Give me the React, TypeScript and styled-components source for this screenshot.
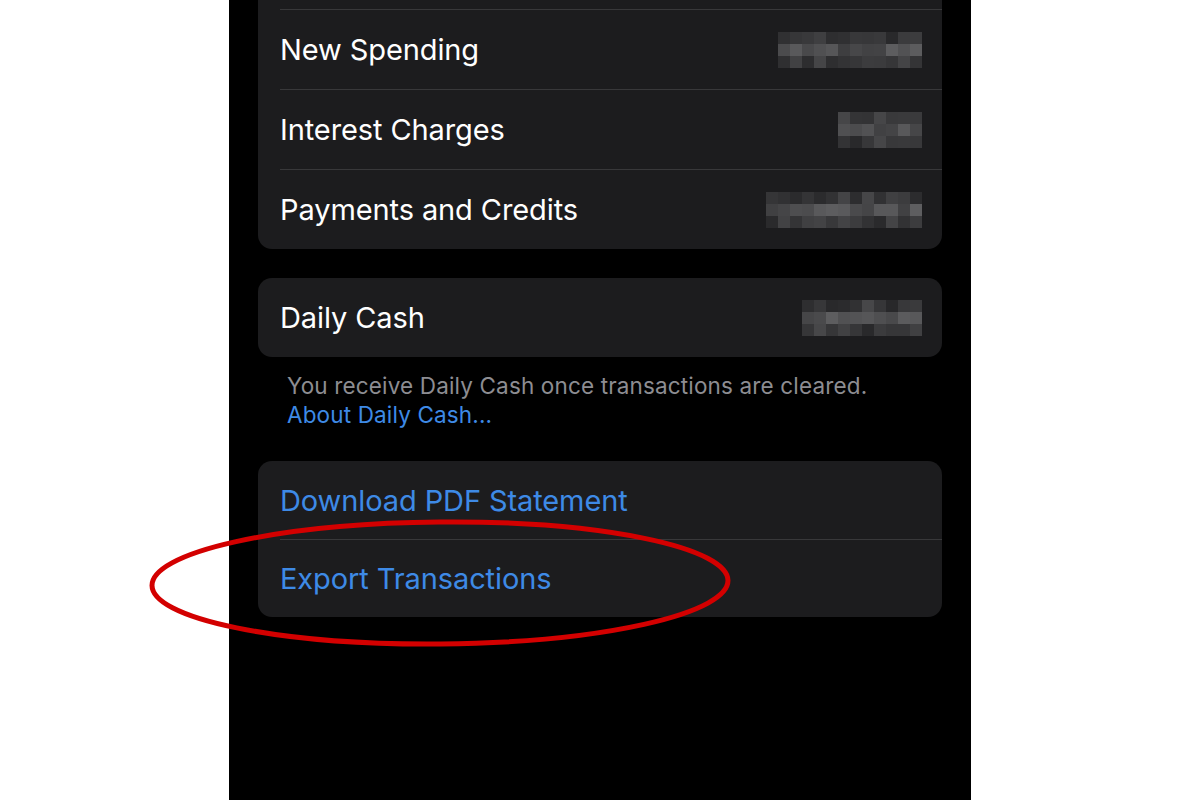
import styled, { createGlobalStyle } from "styled-components";

const GlobalStyle = createGlobalStyle`
    html, body {
        margin: 0;
        padding: 0;
        background: #ffffff;
    }
    * {
        box-sizing: border-box;
    }
`;

const Page = styled.div`
    position: relative;
    width: 1200px;
    height: 800px;
    overflow: hidden;
    background: #ffffff;
    font-family: Inter, "Open Sans", sans-serif;
`;

const Phone = styled.div`
    width: 742px;
    height: 800px;
    margin: 0 auto;
    background: #000000;
    overflow: hidden;
    display: flex;
    flex-direction: column;
`;

const Scroll = styled.div`
    margin-top: -71px;
    padding: 0 29px;
    display: flex;
    flex-direction: column;
`;

const Card = styled.div<{ $gap?: number }>`
    background: #1c1c1e;
    border-radius: 14px;
    overflow: hidden;
    margin-bottom: ${props => props.$gap ?? 29}px;
`;

const Row = styled.div<{ $height?: number }>`
    height: ${props => props.$height ?? 80}px;
    margin-left: 22px;
    padding-right: 20px;
    display: flex;
    align-items: center;
    justify-content: space-between;
    border-top: 1px solid #38383a;

    &:first-child {
        border-top: none;
    }
`;

const Label = styled.span<{ $link?: boolean }>`
    font-size: 29px;
    letter-spacing: -0.1px;
    color: ${props => (props.$link ? "#3e8ae6" : "#ffffff")};
`;

const Blur = styled.div<{ $cols: number }>`
    display: grid;
    grid-template-columns: repeat(${props => props.$cols}, 12px);
    grid-auto-rows: 12px;
`;

const Cell = styled.div<{ $shade: number }>`
    background: ${props => `rgb(${props.$shade}, ${props.$shade}, ${props.$shade + 2})`};
`;

const Footer = styled.div`
    padding: 14px 0 0 29px;
    margin-bottom: 32px;
    font-size: 22.5px;
    letter-spacing: 0.15px;
    line-height: 29px;
    color: #8d8d92;
`;

const FooterLink = styled.div`
    color: #3e8ae6;
`;

const Circle = styled.svg`
    position: absolute;
    left: 140px;
    top: 510px;
    pointer-events: none;
`;

const Pixelated = ({ cols, seed }: { cols: number; seed: number }) => {
    const cells = [];
    for (let i = 0; i < cols * 3; i++) {
        const row = Math.floor(i / cols);
        const n = Math.abs(Math.sin((i + 1) * 12.9898 + seed * 78.233) * 43758.5453) % 1;
        const base = row === 1 ? 62 : 40;
        cells.push(<Cell key={i} $shade={Math.round(base + n * 32)} />);
    }
    return <Blur $cols={cols}>{cells}</Blur>;
};

const App = () => {
    return (
        <Page>
            <GlobalStyle />
            <Phone>
                <Scroll>
                    <Card>
                        <Row />
                        <Row>
                            <Label>New Spending</Label>
                            <Pixelated cols={12} seed={1} />
                        </Row>
                        <Row>
                            <Label>Interest Charges</Label>
                            <Pixelated cols={7} seed={2} />
                        </Row>
                        <Row>
                            <Label>Payments and Credits</Label>
                            <Pixelated cols={13} seed={3} />
                        </Row>
                    </Card>

                    <Card $gap={0}>
                        <Row $height={79}>
                            <Label>Daily Cash</Label>
                            <Pixelated cols={10} seed={4} />
                        </Row>
                    </Card>
                    <Footer>
                        You receive Daily Cash once transactions are cleared.
                        <FooterLink>About Daily Cash...</FooterLink>
                    </Footer>

                    <Card>
                        <Row $height={78}>
                            <Label $link>Download PDF Statement</Label>
                        </Row>
                        <Row $height={78}>
                            <Label $link>Export Transactions</Label>
                        </Row>
                    </Card>
                </Scroll>
            </Phone>

            <Circle width="600" height="150" viewBox="0 0 600 150">
                <ellipse
                    cx="300"
                    cy="73"
                    rx="288"
                    ry="61"
                    fill="none"
                    stroke="#d30000"
                    strokeWidth="5"
                    transform="rotate(-0.5 300 73)"
                />
            </Circle>
        </Page>
    );
};

export default App;
